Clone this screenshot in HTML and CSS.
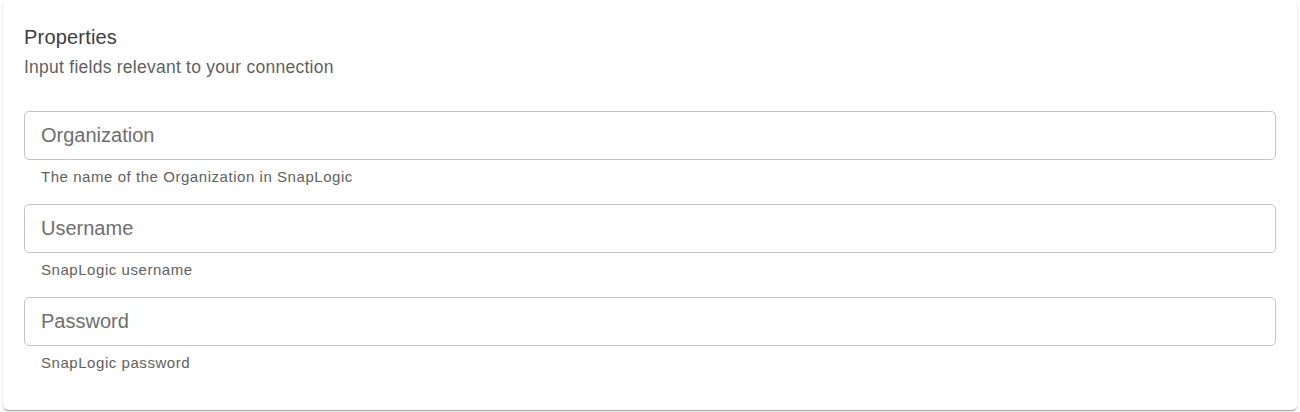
FILE: index.html
```html
<!DOCTYPE html>
<html>
  <head>
    <meta charset="UTF-8" />
    <title>Connection properties</title>
    <link rel="stylesheet" href="styles.css">
  </head>
  <body>
    <div class="card">
      <div class="card-title">Properties</div>
      <div class="card-subtitle">Input fields relevant to your connection</div>
      <div class="fields">
        <div class="field">
          <input type="text" class="field-input" placeholder="Organization" />
          <div class="field-help">The name of the Organization in SnapLogic</div>
        </div>
        <div class="field">
          <input type="text" class="field-input" placeholder="Username" />
          <div class="field-help">SnapLogic username</div>
        </div>
        <div class="field">
          <input type="password" class="field-input" placeholder="Password" />
          <div class="field-help">SnapLogic password</div>
        </div>
      </div>
    </div>
  </body>
</html>
```

FILE: styles.css
```css
html,
body {
  margin: 0;
  padding: 0;
  width: 100%;
  height: 100%;
  background: #fff;
  font-family: "Liberation Sans", Arial, sans-serif;
}
.card {
  margin: 0 3px;
  padding: 25px 21px 37px;
  background: #fff;
  border-radius: 5px;
  box-shadow: 0 2px 1px -1px rgba(0, 0, 0, 0.2), 0 1px 1px 0 rgba(0, 0, 0, 0.14),
    0 1px 3px 0 rgba(0, 0, 0, 0.12);
}
.card-title {
  font-size: 20px;
  line-height: 24px;
  letter-spacing: 0.19px;
  color: #3d3d3d;
}
.card-subtitle {
  margin-top: 8px;
  font-size: 17.5px;
  line-height: 21px;
  letter-spacing: 0.25px;
  color: #5f5f5f;
}
.fields {
  margin-top: 33px;
  display: flex;
  flex-direction: column;
  gap: 17px;
}
.field-input {
  display: block;
  box-sizing: border-box;
  width: 100%;
  height: 49px;
  margin: 0;
  padding: 0 16px;
  border: 1px solid #c4c4c4;
  border-radius: 5px;
  outline: none;
  font-family: inherit;
  font-size: 20px;
  color: #333;
  background: #fff;
}
.field-input::placeholder {
  color: #6e6e6e;
  opacity: 1;
}
.field-help {
  margin-top: 7px;
  padding-left: 17px;
  font-size: 15px;
  line-height: 20px;
  letter-spacing: 0.55px;
  color: #5f5f5f;
}
```
